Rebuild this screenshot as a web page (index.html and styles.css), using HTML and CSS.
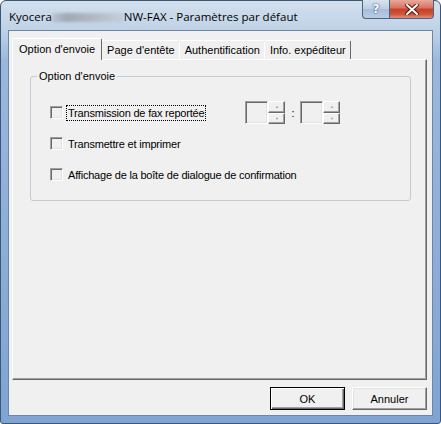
FILE: index.html
```html
<!DOCTYPE html>
<html lang="fr">
<head>
    <meta charset="UTF-8">
    <meta name="viewport" content="width=device-width, initial-scale=1.0">
    <title>Paramètres par défaut</title>

    <link rel="stylesheet" href="styles.css">
</head>
<body>
    <div class="window">
        <div class="titlebar">
            <div class="caption">Kyocera<span class="blur"></span>NW-FAX - Paramètres par défaut</div>
            <div class="caption-buttons">
                <div class="cbtn help">?</div>
                <div class="cbtn close">
                    <svg width="14" height="11" viewBox="0 0 14 11">
                        <path d="M2 1 L12 10 M12 1 L2 10" stroke="#5a1a12" stroke-width="4" stroke-linecap="square"/>
                        <path d="M2 1 L12 10 M12 1 L2 10" stroke="#fff" stroke-width="2" stroke-linecap="square"/>
                    </svg>
                </div>
            </div>
        </div>

        <div class="client">
            <div class="tabs">
                <div class="tab selected">Option d'envoie</div>
                <div class="tab">Page d'entête</div>
                <div class="tab">Authentification</div>
                <div class="tab">Info. expéditeur</div>
            </div>

            <div class="panel">
                <fieldset class="group">
                    <legend>Option d'envoie</legend>

                    <div class="row">
                        <span class="check"></span>
                        <span class="label focus">Transmission de fax reportée</span>
                        <div class="time">
                            <span class="edit"></span>
                            <span class="spin"><i>&#9650;</i><i>&#9660;</i></span>
                            <span class="colon">:</span>
                            <span class="edit"></span>
                            <span class="spin"><i>&#9650;</i><i>&#9660;</i></span>
                        </div>
                    </div>
                    <div class="row">
                        <span class="check"></span>
                        <span class="label">Transmettre et imprimer</span>
                    </div>
                    <div class="row">
                        <span class="check"></span>
                        <span class="label">Affichage de la boîte de dialogue de confirmation</span>
                    </div>
                </fieldset>
            </div>

            <div class="buttons">
                <div class="button default">OK</div>
                <div class="button">Annuler</div>
            </div>
        </div>
    </div>
</body>
</html>
```

FILE: styles.css
```css
:root {
    --face: #f0f0f0;
    --shadow: #a0a0a0;
    --dark: #696969;
    --ui: "Liberation Sans", Arial, sans-serif;
}

* {
    margin: 0;
    padding: 0;
    box-sizing: border-box;
}

body {
    width: 441px;
    height: 424px;
    overflow: hidden;
    background: #fff;
    font-family: var(--ui);
    font-size: 11px;
    color: #000;
}

.window {
    width: 441px;
    height: 424px;
    display: flex;
    flex-direction: column;
    border: 1px solid #3b5778;
    border-radius: 6px 6px 3px 3px;
    background: linear-gradient(#d3e0ee, #bfd1e6 30px, #9ab8dd 60px, #7fa4d2);
    padding: 0 7px 7px 7px;
}

.titlebar {
    height: 29px;
    display: flex;
    justify-content: space-between;
    align-items: flex-start;
    margin: 0 -1px 0 0;
}

.caption {
    font-family: "Open Sans", "Liberation Sans", sans-serif;
    font-size: 11.5px;
    padding: 8px 0 0 1px;
    display: flex;
    align-items: center;
    color: #000;
}

.blur {
    display: inline-block;
    width: 72px;
    height: 9px;
    margin-top: 1px;
    background: linear-gradient(90deg, rgba(160, 170, 180, 0.4), #9fa9b4 20%, #b2bbc5 60%, rgba(190, 198, 206, 0.5));
    filter: blur(1.5px);
}

.caption-buttons {
    display: flex;
    margin-top: -1px;
}

.cbtn {
    height: 19px;
    border: 1px solid #4b6282;
    border-top: none;
    display: flex;
    align-items: center;
    justify-content: center;
}

.help {
    width: 27px;
    border-radius: 0 0 0 4px;
    border-right: none;
    background: linear-gradient(#d8e3ef, #bccde2 50%, #a6bcd8 51%, #b9cde6);
    color: #fff;
    font-family: "DejaVu Sans", sans-serif;
    font-weight: bold;
    font-size: 12px;
    text-shadow: 0 0 2px #34507a, 0 0 1px #34507a;
}

.close {
    width: 45px;
    border-radius: 0 0 4px 0;
    background: linear-gradient(#e9a99c, #d7715e 45%, #c7402a 50%, #d0553c 80%, #e4907a);
}

.client {
    flex: 1;
    background: var(--face);
    border: 1px solid #6d86a8;
    display: flex;
    flex-direction: column;
    padding: 7px 5px 0 3px;
}

.tabs {
    display: flex;
    height: 21px;
    align-items: flex-end;
    padding-left: 2px;
    position: relative;
    z-index: 1;
}

.tab {
    height: 19px;
    padding: 3px 4px 0 5px;
    margin-left: -1px;
    border: 1px solid #fff;
    border-right: 1px solid var(--dark);
    border-bottom: none;
    border-radius: 2px 2px 0 0;
    background: var(--face);
    white-space: nowrap;
}

.tab.selected {
    padding: 4px 6px 0 6px;
    margin-left: -2px;
    margin-right: -2px;
    margin-bottom: -1px;
    height: 22px;
    position: relative;
    z-index: 2;
}

.tab.selected + .tab {
    margin-left: 1px;
}

.panel {
    height: 321px;
    border: 1px solid #fff;
    border-right-color: var(--dark);
    border-bottom-color: var(--dark);
    box-shadow: inset -1px -1px 0 var(--shadow);
    padding: 10px 15px 0 17px;
}

.group {
    height: 131px;
    border: 1px solid #c3ccd2;
    border-radius: 3px;
    padding: 22px 0 0 19px;
    display: flex;
    flex-direction: column;
    gap: 14px;
}

.group legend {
    margin-left: -13px;
    padding: 0 2px;
}

.row {
    display: flex;
    align-items: center;
    height: 17px;
}

.check {
    width: 13px;
    height: 13px;
    border: 1px solid;
    border-color: var(--shadow) #fff #fff var(--shadow);
    box-shadow: inset 1px 1px 0 var(--dark), inset -1px -1px 0 #e3e3e3;
    background: var(--face);
    margin-right: 3px;
}

.label {
    padding: 1px 1px;
    border: 1px dotted transparent;
    letter-spacing: -0.2px;
}

.label.focus {
    border-color: #000;
}

.time {
    display: flex;
    align-items: center;
    margin-left: 39px;
    height: 23px;
}

.edit {
    width: 23px;
    height: 23px;
    border: 1px solid;
    border-color: var(--shadow) #fff #fff var(--shadow);
    box-shadow: inset 1px 1px 0 var(--dark), inset -1px -1px 0 #e3e3e3;
}

.spin {
    width: 17px;
    height: 23px;
    display: flex;
    flex-direction: column;
}

.spin i {
    flex: 1;
    font-style: normal;
    font-size: 4px;
    color: #a0a0a0;
    display: flex;
    align-items: center;
    justify-content: center;
    border: 1px solid;
    border-color: #fff var(--dark) var(--dark) #fff;
    box-shadow: inset -1px -1px 0 var(--shadow);
}

.colon {
    width: 15px;
    text-align: center;
}

.buttons {
    display: flex;
    justify-content: flex-end;
    gap: 7px;
    padding: 7px 0 0 0;
}

.button {
    width: 75px;
    height: 23px;
    display: flex;
    align-items: center;
    justify-content: center;
    border: 1px solid;
    border-color: #fff var(--dark) var(--dark) #fff;
    box-shadow: inset -1px -1px 0 var(--shadow), inset 1px 1px 0 #e3e3e3;
}

.button.default {
    border: 1px solid #000;
    box-shadow: inset 1px 1px 0 #fff, inset -1px -1px 0 var(--dark), inset -2px -2px 0 var(--shadow);
}
```
